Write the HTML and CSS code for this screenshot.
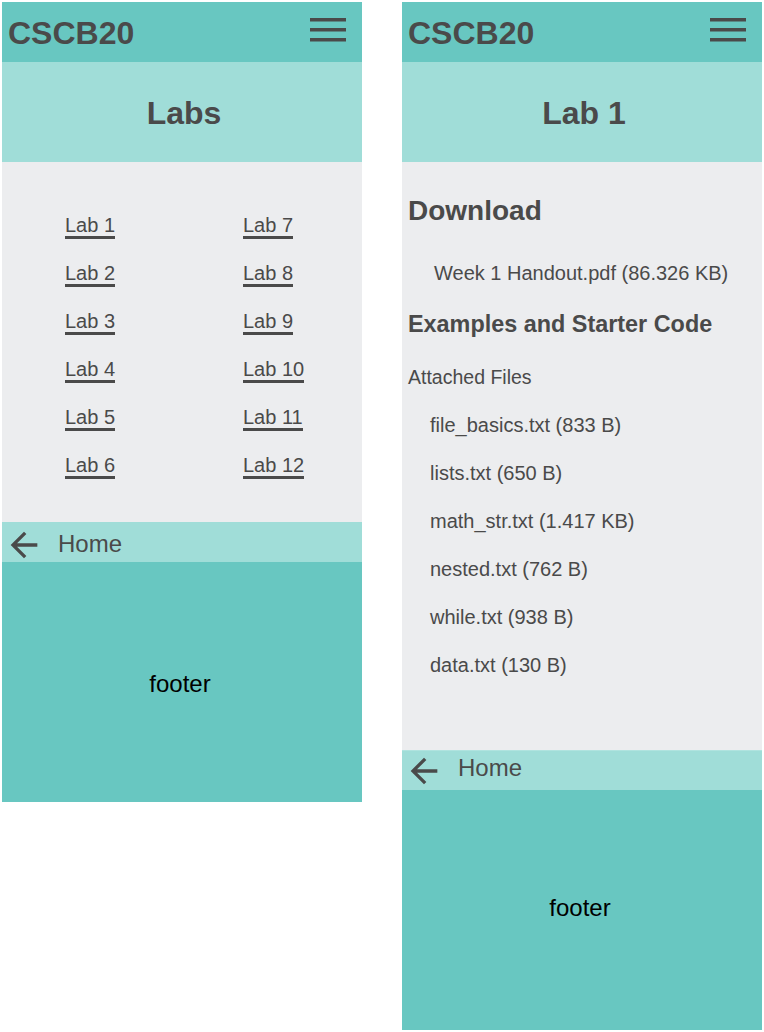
FILE: index.html
```html
<!DOCTYPE html>
<html lang="en">
<head>
<meta charset="utf-8">
<title>CSCB20 Labs</title>
<link rel="stylesheet" href="styles.css">
</head>
<body>
<div class="screens">
  <section class="panel">
    <header class="topbar">
      <span class="brand">CSCB20</span>
      <svg class="burger" width="36" height="24" viewBox="0 0 36 24"><rect x="0" y="0" width="36" height="3.5"/><rect x="0" y="10" width="36" height="3.5"/><rect x="0" y="20" width="36" height="3.5"/></svg>
    </header>
    <div class="banner"><h1 class="banner-title">Labs</h1></div>
    <main class="content content--labs">
      <ul class="lab-grid">
        <li><a href="#">Lab 1</a></li>
        <li><a href="#">Lab 2</a></li>
        <li><a href="#">Lab 3</a></li>
        <li><a href="#">Lab 4</a></li>
        <li><a href="#">Lab 5</a></li>
        <li><a href="#">Lab 6</a></li>
        <li><a href="#">Lab 7</a></li>
        <li><a href="#">Lab 8</a></li>
        <li><a href="#">Lab 9</a></li>
        <li><a href="#">Lab 10</a></li>
        <li><a href="#">Lab 11</a></li>
        <li><a href="#">Lab 12</a></li>
      </ul>
    </main>
    <nav class="home">
      <svg class="back" width="40" height="40" viewBox="0 0 24 24"><path d="M20 11H7.830l5.59-5.59L12 4l-8 8 8 8 1.41-1.410L7.83 13H20v-2z"/></svg>
      <span class="home-label">Home</span>
    </nav>
    <footer class="footer"><span class="footer-text">footer</span></footer>
  </section>

  <section class="panel panel--lab">
    <header class="topbar">
      <span class="brand">CSCB20</span>
      <svg class="burger" width="36" height="24" viewBox="0 0 36 24"><rect x="0" y="0" width="36" height="3.5"/><rect x="0" y="10" width="36" height="3.5"/><rect x="0" y="20" width="36" height="3.5"/></svg>
    </header>
    <div class="banner"><h1 class="banner-title">Lab 1</h1></div>
    <main class="content content--lab">
      <h2 class="dl-title">Download</h2>
      <p class="handout">Week 1 Handout.pdf (86.326 KB)</p>
      <h3 class="ex-title">Examples and Starter Code</h3>
      <p class="attached">Attached Files</p>
      <ul class="files">
        <li>file_basics.txt (833 B)</li>
        <li>lists.txt (650 B)</li>
        <li>math_str.txt (1.417 KB)</li>
        <li>nested.txt (762 B)</li>
        <li>while.txt (938 B)</li>
        <li>data.txt (130 B)</li>
      </ul>
    </main>
    <nav class="home">
      <svg class="back" width="40" height="40" viewBox="0 0 24 24"><path d="M20 11H7.83l5.59-5.59L12 4l-8 8 8 8 1.41-1.41L7.83 13H20v-2z"/></svg>
      <span class="home-label">Home</span>
    </nav>
    <footer class="footer"><span class="footer-text">footer</span></footer>
  </section>
</div>
</body>
</html>
```

FILE: styles.css
```css
* { box-sizing: border-box; }

html, body {
  margin: 0;
  padding: 0;
  background: #ffffff;
}

body {
  font-family: "Liberation Sans", Arial, sans-serif;
  color: #4a4a4a;
}

.screens {
  display: flex;
  align-items: flex-start;
  gap: 40px;
  padding: 2px;
}

.panel {
  width: 360px;
  display: flex;
  flex-direction: column;
}

.topbar {
  height: 60px;
  background: #68c7c1;
  display: flex;
  justify-content: space-between;
  align-items: flex-start;
  padding: 13px 16px 0 6px;
}

.brand {
  font-size: 32px;
  font-weight: bold;
  line-height: normal;
}

.burger {
  margin-top: 3px;
  fill: #4a4a4a;
}

.banner {
  height: 100px;
  background: #a0ddd8;
  padding: 33px 0 0 4px;
}

.banner-title {
  margin: 0;
  font-size: 32px;
  font-weight: bold;
  line-height: normal;
  text-align: center;
}

.content {
  background: #ecedef;
}

.content--labs {
  height: 360px;
  padding: 39px 0 33px 63px;
}

.lab-grid {
  list-style: none;
  margin: 0;
  padding: 0;
  display: grid;
  grid-template-columns: 178px 1fr;
  grid-template-rows: repeat(6, 48px);
  grid-auto-flow: column;
}

.lab-grid li {
  font-size: 20px;
  line-height: 48px;
}

.lab-grid a {
  color: #4a4a4a;
  text-decoration: none;
  border-bottom: 3px solid #4a4a4a;
}

.content--lab {
  padding: 29px 0 61px 6px;
}

.dl-title {
  margin: 0;
  font-size: 28px;
  font-weight: bold;
  line-height: 40px;
}

.handout {
  margin: 18px 0 0 26px;
  font-size: 20px;
  line-height: 48px;
}

.ex-title {
  margin: 6.5px 0 0 0;
  font-size: 23.4px;
  font-weight: bold;
  line-height: 40px;
}

.attached {
  margin: 9px 0 0 0;
  font-size: 19.5px;
  line-height: 48px;
}

.files {
  list-style: none;
  margin: 0;
  padding: 0 0 0 22px;
}

.files li {
  font-size: 20px;
  line-height: 48px;
}

.home {
  height: 40px;
  background: #a0ddd8;
  display: flex;
  align-items: flex-start;
  padding: 3px 0 0 2px;
}

.back {
  fill: #4a4a4a;
  flex: none;
}

.home-label {
  margin: 4.5px 0 0 14px;
  font-size: 24px;
  line-height: normal;
}

.footer {
  height: 240px;
  background: #68c7c1;
  display: flex;
  align-items: center;
  justify-content: center;
  padding: 3px 4px 0 0;
}

.footer-text {
  font-size: 24px;
  color: #000000;
}

.panel--lab .home {
  height: 40.5px;
  padding-top: 0;
  border-top: 1px solid #b0e3df;
}

.panel--lab .home-label {
  margin-top: 3px;
}

.panel--lab .footer {
  padding-top: 0;
  padding-bottom: 4px;
}
```
